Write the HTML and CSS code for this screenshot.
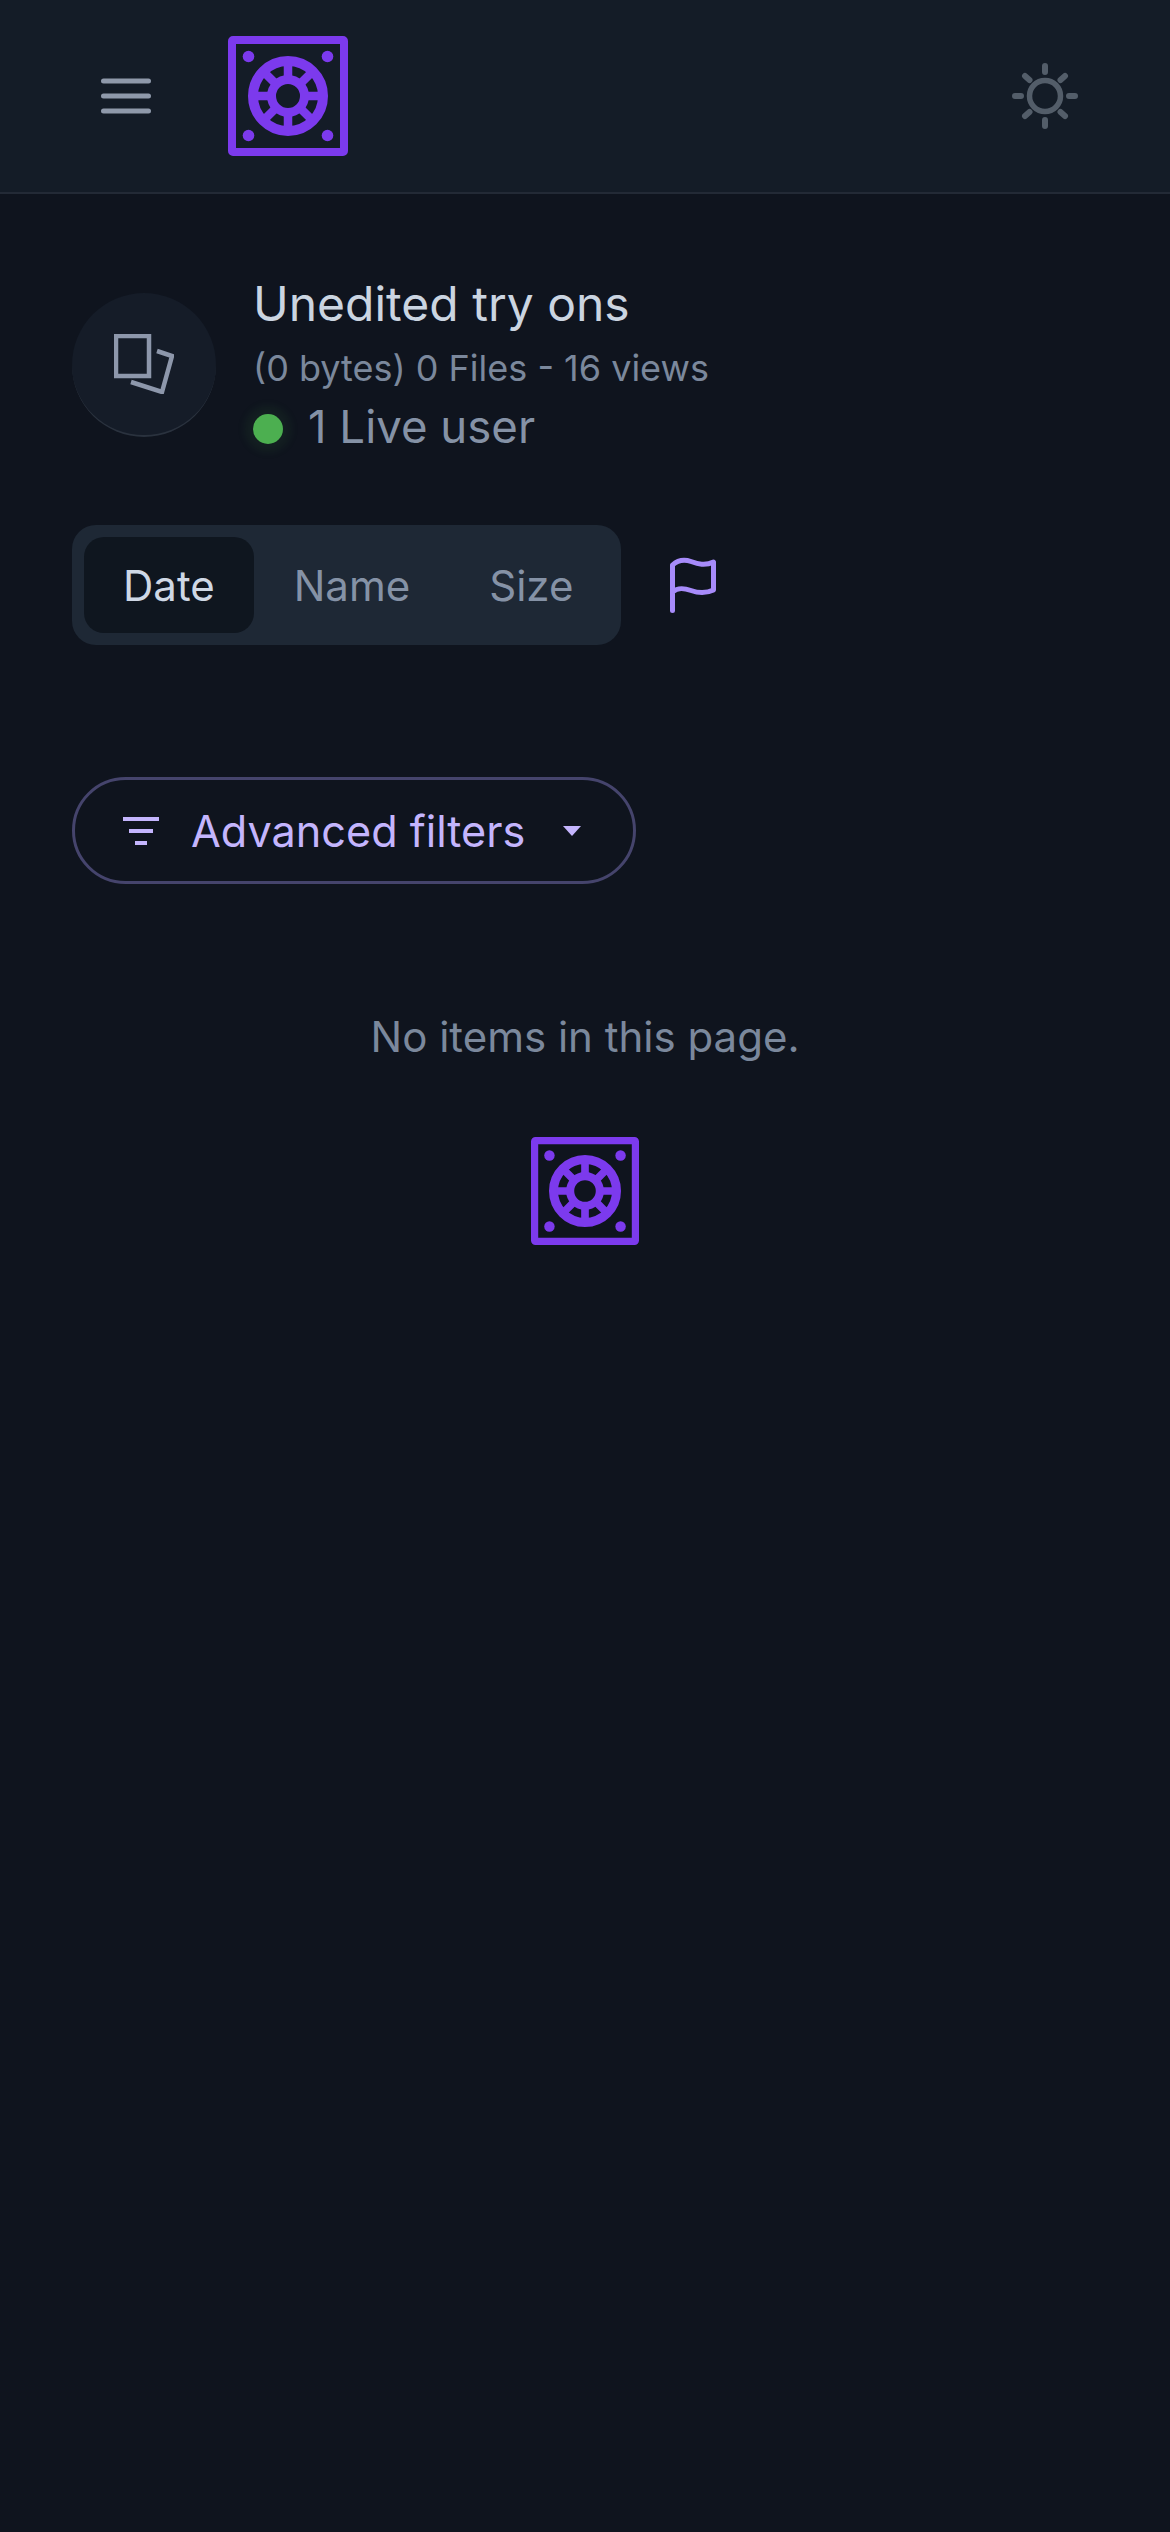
FILE: index.html
```html
<!DOCTYPE html>
<html lang="en">
<head>
<meta charset="utf-8">
<title>Unedited try ons</title>
<link rel="stylesheet" href="styles.css">
</head>
<body>
<svg class="defs" width="0" height="0" aria-hidden="true">
  <symbol id="logo" viewBox="0 0 120 120">
    <rect x="4" y="4" width="112" height="112" rx="1" fill="none" stroke="currentColor" stroke-width="8"/>
    <circle cx="20.5" cy="20.5" r="5.8" fill="currentColor"/>
    <circle cx="99.5" cy="20.5" r="5.8" fill="currentColor"/>
    <circle cx="20.5" cy="99.5" r="5.8" fill="currentColor"/>
    <circle cx="99.5" cy="99.5" r="5.8" fill="currentColor"/>
    <circle cx="60" cy="60" r="35" fill="none" stroke="currentColor" stroke-width="10"/>
    <circle cx="60" cy="60" r="16.500" fill="none" stroke="currentColor" stroke-width="9"/>
    <path d="M60 28V43M60 77V92M28 60H43M77 60H92M37.400 37.400 48 48M72 72 82.600 82.600M82.600 37.400 72 48M48 72 37.400 82.600" stroke="currentColor" stroke-width="8.500" fill="none"/>
  </symbol>
</svg>
<header class="topbar">
  <div class="topbar-left">
    <svg class="menu-icon" viewBox="0 0 50 36"><path d="M2.500 3H47.500M2.500 18H47.500M2.500 33H47.500" fill="none" stroke="currentColor" stroke-width="5" stroke-linecap="round"/></svg>
    <svg class="logo-large"><use href="#logo"/></svg>
  </div>
  <svg class="sun-icon" viewBox="0 0 66 66"><circle cx="33" cy="33" r="15.500" fill="none" stroke="currentColor" stroke-width="5.500"/><path d="M33 3V9M33 57V63M3 33H9M57 33H63M13 13 17.500 17M53 13 48.500 17M13 53 17.500 49M53 53 48.500 49" fill="none" stroke="currentColor" stroke-width="6" stroke-linecap="round"/></svg>
</header>
<main class="content">
  <section class="folder">
    <div class="avatar">
      <svg class="avatar-icon" viewBox="0 0 60 60"><rect x="2" y="2" width="33" height="40" fill="none" stroke="currentColor" stroke-width="4.500"/><path d="M43 17 58 22 48 58 17 48" fill="none" stroke="currentColor" stroke-width="4.500"/></svg>
    </div>
    <div class="folder-info">
      <h1 class="folder-title">Unedited try ons</h1>
      <p class="folder-meta">(0 bytes) 0 Files - 16 views</p>
      <p class="live"><span class="live-dot"></span>1 Live user</p>
    </div>
  </section>
  <section class="sort-row">
    <div class="tabs">
      <span class="tab tab-active">Date</span>
      <span class="tab">Name</span>
      <span class="tab">Size</span>
    </div>
    <svg class="flag-icon" viewBox="0 0 46 56"><path d="M2.500 53.500V8C8 3 14 2 21 4.500S35 9 43.500 5V33C35 37 28 36 21 33.500S8 30 2.500 35" fill="none" stroke="currentColor" stroke-width="5" stroke-linecap="round" stroke-linejoin="round"/></svg>
  </section>
  <button class="filters" type="button">
    <svg class="filter-icon" viewBox="0 0 36 28"><path d="M0 2H36M6 14H30M12 26H24" fill="none" stroke="currentColor" stroke-width="4"/></svg>
    <span class="filters-label">Advanced filters</span>
    <svg class="caret" viewBox="0 0 18 10"><path d="M0 0H18L9 10Z" fill="currentColor"/></svg>
  </button>
  <p class="empty">No items in this page.</p>
  <svg class="logo-small"><use href="#logo"/></svg>
</main>
</body>
</html>
```
FILE: styles.css
```css
* { box-sizing: border-box; }
html, body { margin: 0; padding: 0; }
body {
  min-height: 2532px;
  background: #0f141e;
  font-family: Inter, "Liberation Sans", sans-serif;
  color: #8592a6;
}
.defs { display: block; width: 0; height: 0; }
.topbar {
  height: 194px;
  background: #141c27;
  border-bottom: 2px solid #232a36;
  display: flex;
  align-items: flex-start;
  justify-content: space-between;
  padding: 36px 92px 0 101px;
}
.topbar-left { display: flex; align-items: center; gap: 77px; }
.menu-icon { width: 50px; height: 36px; color: #8f99aa; display: block; }
.logo-large { width: 120px; height: 120px; color: #7c3aed; display: block; }
.sun-icon { width: 66px; height: 66px; color: #535d69; display: block; margin-top: 27px; }
.content { padding: 0 72px; display: flex; flex-direction: column; align-items: flex-start; }
.folder { display: flex; align-items: flex-start; gap: 37px; padding-top: 80px; }
.avatar {
  width: 144px;
  height: 144px;
  margin-top: 19px;
  border-radius: 50%;
  background: #151c28;
  border-bottom: 2px solid #2a323e;
  display: flex;
  align-items: center;
  justify-content: center;
}
.avatar-icon { width: 60px; height: 60px; color: #8d97ab; display: block; }
.folder-info { display: flex; flex-direction: column; }
.folder-title { margin: 0; font-size: 48px; line-height: 60px; font-weight: 400; color: #cbd5e1; }
.folder-meta { margin: 0; font-size: 36px; line-height: 68px; color: #7b889c; }
.live { margin: 0; font-size: 45.600px; line-height: 50px; display: flex; align-items: center; gap: 25px; color: #8592a6; }
.live-dot {
  width: 30px;
  height: 30px;
  margin-top: 4px;
  border-radius: 50%;
  background: #4caf50;
  box-shadow: 0 0 10px 8px rgba(76, 175, 80, .08);
}
.sort-row { display: flex; align-items: center; gap: 49px; margin-top: 73px; }
.tabs {
  width: 549px;
  height: 120px;
  padding: 12px;
  background: #1e2835;
  border-radius: 24px;
  display: flex;
  align-items: stretch;
  gap: 1px;
}
.tab { font-size: 42px; display: flex; align-items: center; justify-content: center; padding: 0 39px; color: #8592a6; }
.tab-active { background: #0f161f; color: #cfd8e5; border-radius: 20px; }
.flag-icon { width: 46px; height: 56px; color: #a78bfa; display: block; }
.filters {
  margin-top: 132px;
  width: 564px;
  height: 107px;
  padding: 0 40px 0 48px;
  border: 3px solid #45446c;
  border-radius: 54px;
  background: transparent;
  color: #c4b5fd;
  font-family: inherit;
  display: flex;
  align-items: center;
}
.filter-icon { width: 36px; height: 28px; display: block; flex: none; }
.filters-label { font-size: 43.200px; margin-left: 32px; white-space: nowrap; }
.caret { width: 18px; height: 10px; display: block; margin-left: 38px; flex: none; }
.empty { align-self: center; margin: 123px 0 0; font-size: 42px; line-height: 60px; color: #7b889c; }
.logo-small { width: 108px; height: 108px; color: #7c3aed; display: block; align-self: center; margin-top: 70px; }
```
